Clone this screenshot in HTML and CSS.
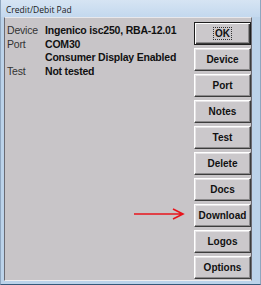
FILE: index.html
```html
<!DOCTYPE html>
<html lang="en">
<head>
    <meta charset="UTF-8">
    <title>Credit/Debit Pad</title>
    <link rel="stylesheet" href="styles.css">
</head>
<body>
    <div class="window">
        <div class="titlebar">Credit/Debit Pad</div>
        <div class="client">
            <div class="info">
                <div class="row"><span class="label">Device</span><span class="value">Ingenico isc250, RBA-12.01</span></div>
                <div class="row"><span class="label">Port</span><span class="value">COM30</span></div>
                <div class="row"><span class="label"></span><span class="value">Consumer Display Enabled</span></div>
                <div class="row"><span class="label">Test</span><span class="value">Not tested</span></div>
            </div>
            <div class="buttons">
                <button class="btn default"><span class="focus">OK</span></button>
                <button class="btn">Device</button>
                <button class="btn">Port</button>
                <button class="btn">Notes</button>
                <button class="btn">Test</button>
                <button class="btn">Delete</button>
                <button class="btn">Docs</button>
                <button class="btn">Download</button>
                <button class="btn">Logos</button>
                <button class="btn">Options</button>
            </div>
            <svg class="arrow" width="52" height="14" viewBox="0 0 52 14">
                <path d="M0 7 H48 M39 2 L49 7 L39 12" fill="none" stroke="#e8141c" stroke-width="1.6"/>
            </svg>
        </div>
    </div>
</body>
</html>
```

FILE: styles.css
```css
body {
    margin: 0;
    padding: 0;
    background: #ffffff;
}
.window {
    width: 261px;
    height: 285px;
    box-sizing: border-box;
    background: #bcd3ea;
    border-left: 1px solid #8fa6bf;
    border-right: 1px solid #8fa6bf;
    border-bottom: 1px solid #35597a;
    padding: 0 8px 3px 3px;
    display: flex;
    flex-direction: column;
}
.titlebar {
    height: 17px;
    line-height: 19px;
    font-family: "Open Sans", sans-serif;
    font-size: 8.5px;
    color: #1a1a1a;
    background: linear-gradient(#d6e4f3, #c3d8ee);
    margin: 0 -8px 0 -3px;
    padding-left: 5px;
}
.client {
    position: relative;
    flex: 1;
    display: flex;
    background: #c8c5c8;
    border-left: 1px solid #6b6b73;
    border-top: 1px solid #e8e8ec;
    border-right: 1px solid #6b6b73;
    border-bottom: 1px solid #f0eef0;
}
.info {
    flex: 1;
    padding: 6px 0 0 2px;
    font-family: "Liberation Sans", Arial, sans-serif;
    font-size: 10.5px;
    letter-spacing: -0.2px;
}
.row {
    display: flex;
    height: 13.7px;
    line-height: 13px;
}
.label {
    width: 38px;
    color: #333333;
}
.value {
    font-weight: bold;
    color: #111;
    white-space: nowrap;
}
.buttons {
    width: 57px;
    padding-top: 4px;
    display: flex;
    flex-direction: column;
    gap: 3px;
}
.btn {
    height: 23px;
    margin: 0;
    padding: 0;
    box-sizing: border-box;
    background: #cbc8cb;
    border: 1px solid;
    border-color: #ffffff #3c3c3c #3c3c3c #ffffff;
    box-shadow: inset -1px -1px 0 #8c8a8c, inset 1px 1px 0 #e6e4e6;
    font-family: "Liberation Sans", Arial, sans-serif;
    font-size: 10px;
    font-weight: bold;
    color: #111;
}
.btn.default {
    border: 1px solid #1e1e1e;
    box-shadow: inset 1px 1px 0 #ffffff, inset -1px -1px 0 #3c3c3c, inset -2px -2px 0 #8c8a8c;
}
.focus {
    outline: 1px dotted #333;
    padding: 0 1px;
}
.arrow {
    position: absolute;
    left: 129px;
    top: 189px;
}
```
